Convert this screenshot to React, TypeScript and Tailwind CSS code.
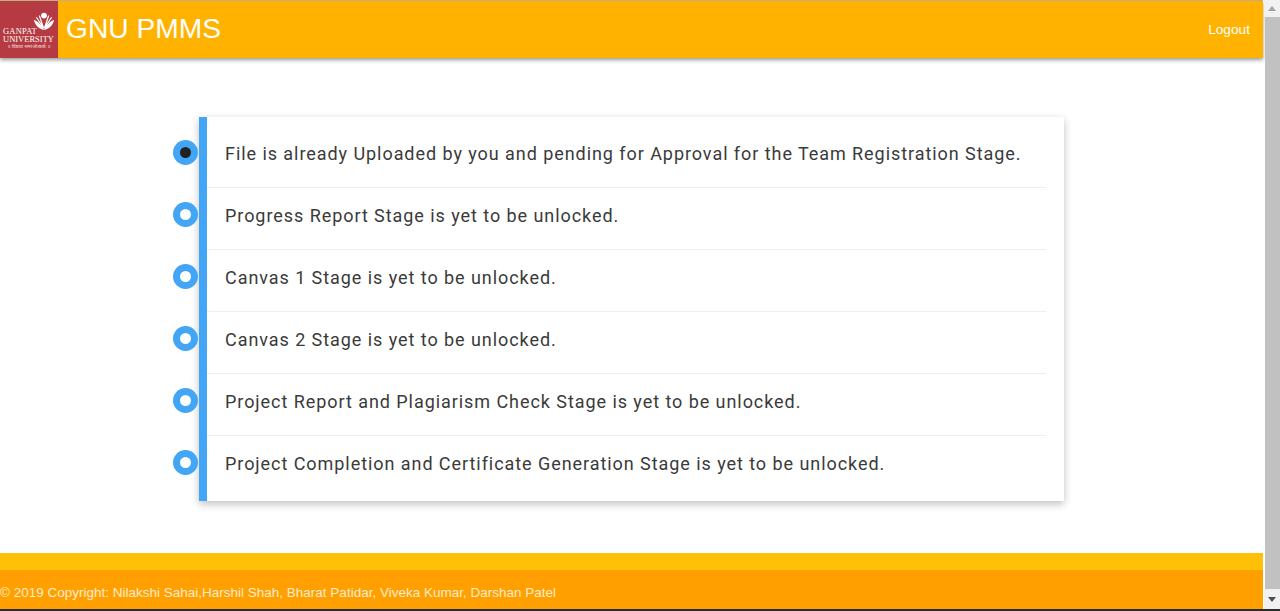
const rows = [
  "File is already Uploaded by you and pending for Approval for the Team Registration Stage.",
  "Progress Report Stage is yet to be unlocked.",
  "Canvas 1 Stage is yet to be unlocked.",
  "Canvas 2 Stage is yet to be unlocked.",
  "Project Report and Plagiarism Check Stage is yet to be unlocked.",
  "Project Completion and Certificate Generation Stage is yet to be unlocked.",
];

function Logo() {
  return (
    <div className="w-[58px] h-[57px] bg-[#b53a41] flex flex-col items-start shrink-0 text-white pt-[11px]">
      <svg width="22" height="19" viewBox="0 0 26 22" className="ml-[33px]" fill="none">
        <circle cx="13" cy="4" r="3.4" fill="#fff" />
        <path d="M13 21 C11 16 6 11 1 9 C2 15 7 20 13 21Z" fill="#fff" />
        <path d="M13 21 C15 16 20 11 25 9 C24 15 19 20 13 21Z" fill="#fff" />
        <path d="M12.5 19 L4 6 M12.5 19 L7.5 4 M13.5 19 L22 6 M13.5 19 L18.5 4" stroke="#fff" strokeWidth="1.5" />
      </svg>
      <div className="pl-[3px] text-[8.5px] leading-[8px] tracking-[0.2px] font-['Liberation_Serif',serif] -mt-[4px]">GANPAT</div>
      <div className="pl-[3px] text-[8.5px] leading-[8px] font-['Liberation_Serif',serif]">UNIVERSITY</div>
      <div className="w-full text-center text-[5px] leading-[7px] font-['Noto_Sans',sans-serif] opacity-80">॥ विद्यया समाजोत्कर्षः ॥</div>
    </div>
  );
}

function Row({ text, index }: { text: string; index: number }) {
  return (
    <li className="relative">
      <span
        className={`absolute left-[-34px] top-[14px] w-[25px] h-[25px] rounded-full border-[7px] border-[#42a5f5] ${
          index === 0 ? "bg-[#212121]" : "bg-white"
        }`}
      />
      <div
        className={`h-[62px] pt-[15px] pl-[18px] mr-[18px] ${
          index < rows.length - 1 ? "border-b border-[#eeeeee]" : ""
        }`}
      >
        <p className="text-[18px] leading-[26px] tracking-[0.94px] text-[#3a3a3a]">{text}</p>
      </div>
    </li>
  );
}

export default function App() {
  return (
    <div className="h-[611px] w-[1280px] overflow-hidden flex flex-col bg-white font-['Roboto',sans-serif]">
      <div className="flex flex-1 min-h-0">
        <div className="w-[1263px] flex flex-col">
          <div className="h-[1px] bg-[#cdb588] shrink-0" />
          <header className="h-[57px] bg-[#ffb300] flex items-center justify-between shadow-[0_2px_4px_rgba(0,0,0,0.4)] shrink-0 pr-[13px]">
            <div className="flex items-center">
              <Logo />
              <span className="ml-2 mb-[2px] text-[28.2px] text-white font-['Liberation_Sans',sans-serif]">GNU PMMS</span>
            </div>
            <a className="mt-[2px] text-[13.7px] text-white font-['Liberation_Sans',sans-serif]">Logout</a>
          </header>
          <main className="flex-1 min-h-0 pt-[59px] pl-[199px]">
            <ul className="w-[865px] h-[384px] bg-white border-l-[8px] border-[#42a5f5] pt-[9px] shadow-[0_3px_8px_rgba(0,0,0,0.25)]">
              {rows.map((r, i) => (
                <Row key={r} text={r} index={i} />
              ))}
            </ul>
          </main>
          <footer className="shrink-0 font-['Liberation_Sans',sans-serif]">
            <div className="h-[17px] bg-[#ffc107]" />
            <div className="h-[39px] bg-[#ffa000] flex items-center pt-[7px] text-[13.5px] text-[#ffeccb]">
              © 2019 Copyright: Nilakshi Sahai,Harshil Shah, Bharat Patidar, Viveka Kumar, Darshan Patel
            </div>
          </footer>
        </div>
        <div className="w-[17px] flex flex-col items-end">
          <div className="w-4 h-[17px] bg-[#f1f1f1] flex items-center justify-center">
            <svg width="8" height="5" viewBox="0 0 8 5"><path d="M4 0 L8 5 H0Z" fill="#a3a3a3" /></svg>
          </div>
          <div className="w-[15px] h-[572px] bg-[#c1c1c1]" />
          <div className="w-4 flex-1 bg-[#f1f1f1] flex items-center justify-center">
            <svg width="8" height="5" viewBox="0 0 8 5"><path d="M0 0 H8 L4 5Z" fill="#505050" /></svg>
          </div>
        </div>
      </div>
      <div className="h-[2px] bg-[#2a2a2a] shrink-0" />
    </div>
  );
}
